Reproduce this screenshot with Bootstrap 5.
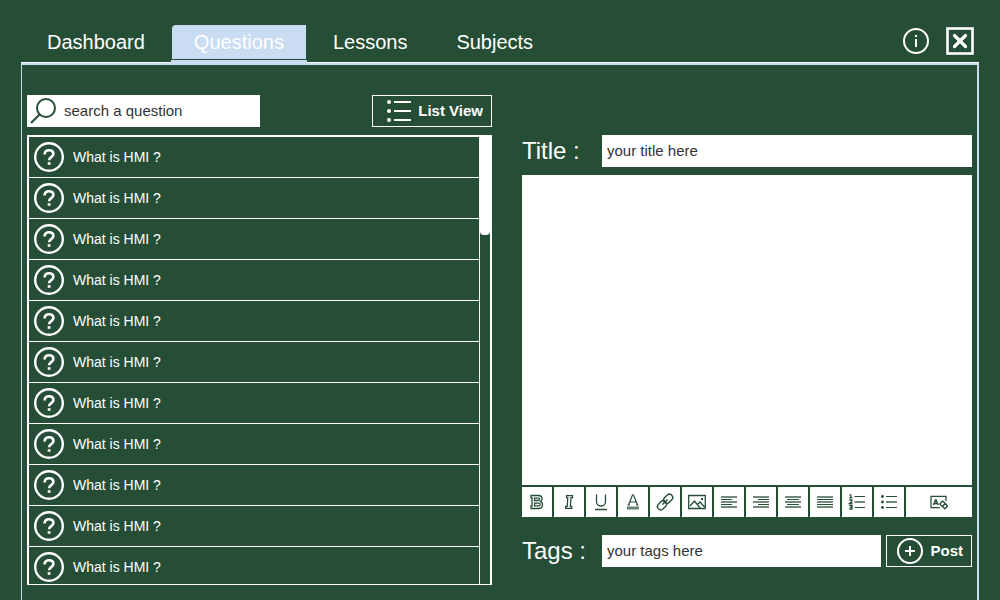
<!DOCTYPE html>
<html lang="en">
<head>
<meta charset="utf-8">
<meta name="viewport" content="width=device-width, initial-scale=1">
<title>Questions</title>
<link href="https://cdn.jsdelivr.net/npm/bootstrap@5.3.0/dist/css/bootstrap.min.css" rel="stylesheet">
<style>
:root { --board: #264e36; --sky: #c9dcf2; }
body { background: var(--board); color: #fff; font-family: "Liberation Sans", Arial, sans-serif; font-size: 14px; line-height: 20px; }
svg { display: block; flex: none; fill: none; stroke: currentColor; }
.page { height: 100vh; min-height: 480px; padding: 25px 21px 0; }
.tabs { gap: 5px; padding-left: 4px; }
.tabs .nav-link { position: relative; height: 34px; margin-bottom: 3px; padding: 0 22px; line-height: 34px; font-size: 20px; color: #fff; border-radius: 4px 0 0 0; }
.tabs .nav-link.active { background: var(--sky); }
.tabs .nav-link.active::after { content: ""; position: absolute; left: -1px; right: -1px; bottom: -4px; height: 3px; background: var(--sky); }
.tools { gap: 17px; padding-right: 5px; height: 31px; }
.plain { display: block; padding: 0; border: 0; background: none; color: #fff; }
.panel { min-height: 0; border: solid var(--sky); border-width: 2px 2px 0 1px; display: grid; grid-template-columns: 31fr 30fr; grid-template-rows: minmax(0, 1fr); gap: 30px; padding: 30px 5px 15px; }
.topline { border-top: 1px solid #fff; }
.field { height: 32px; min-width: 0; padding: 0 5px 2px; border: 0; border-radius: 0; background: #fff; font-size: 15px; color: #333; }
.field::placeholder { color: #333; opacity: 1; }
.search { width: 50%; height: 32px; background: #fff; color: var(--board); padding-left: 2px; }
.outlined { height: 32px; border: 1px solid #fff; border-radius: 0; color: #fff; font-size: 15px; font-weight: bold; line-height: 20px; padding: 0 8px 0 9px; gap: 7px; white-space: nowrap; }
.outlined:hover { background: #fff; color: var(--board); }
.questions { min-height: 0; border: solid #fff; border-width: 2px 2px 1px; }
.questions .list-group-item { height: 41px; padding: 0 5px; gap: 9px; background: none; color: #fff; border: 0; border-bottom: 1px solid #fff; border-radius: 0; }
.track { width: 11px; border-left: 1px solid #fff; }
.thumb { height: 22%; background: #fff; border-radius: 0 0 4px 4px; }
.form-side { padding: 40px 0 18px; }
.caption { width: 80px; font-size: 24px; line-height: 32px; }
.writing { border: 0; border-radius: 0; resize: none; background: #fff; margin: 8px 0 2px; padding: 5px; min-height: 0; }
.tool { width: 30px; height: 30px; border: 0; border-radius: 0; background: #fff; color: var(--board); padding: 0; display: flex; align-items: center; justify-content: center; }
.bar { gap: 2px; margin-bottom: 18px; }
.tag-row { column-gap: 5px; }
.tag-row .caption { margin-right: -5px; }
</style>
</head>
<body>
<svg width="0" height="0" class="position-absolute" aria-hidden="true">
  <symbol id="ask" viewBox="0 0 30 30">
    <circle cx="15" cy="15" r="13.8" stroke-width="2.4"/>
    <path d="M10.6 12.4C10.6 9.600 12.400 8.200 15 8.200s4.400 1.500 4.400 3.800c0 3.100-4.300 3.200-4.300 6.200" stroke-width="2.600"/>
    <path d="M15.100 20.200v2.600" stroke-width="2.800"/>
  </symbol>
</svg>
<div class="page d-flex flex-column">
  <header class="d-flex justify-content-between">
    <nav class="nav tabs flex-nowrap">
      <a class="nav-link" href="#">Dashboard</a>
      <a class="nav-link active" href="#" aria-current="page">Questions</a>
      <a class="nav-link" href="#">Lessons</a>
      <a class="nav-link" href="#">Subjects</a>
    </nav>
    <div class="tools d-flex align-items-center">
      <button class="plain" type="button" aria-label="Information"><svg width="26" height="26" viewBox="0 0 26 26"><circle cx="13" cy="13" r="12" stroke-width="2"/><path d="M13 11v8M13 7v2" stroke-width="2"/></svg></button>
      <button class="plain" type="button" aria-label="Close"><svg width="28" height="30" viewBox="0 0 28 30"><rect x="1.500" y="2.500" width="25" height="25" stroke-width="2.600"/><path d="M8.500 9.500l11 11M19.500 9.500l-11 11" stroke-width="3.200" stroke-linecap="round"/></svg></button>
    </div>
  </header>
  <div class="topline"></div>
  <main class="panel flex-fill">
    <section class="d-flex flex-column">
      <div class="d-flex justify-content-between mb-2">
        <div class="search d-flex align-items-center">
          <svg width="30" height="32" viewBox="0 0 30 32"><circle cx="17" cy="13" r="9" stroke-width="2"/><path d="M10.500 19.500L2 28" stroke-width="2.200"/></svg>
          <input class="field flex-fill" type="text" placeholder="search a question" aria-label="Search a question">
        </div>
        <button class="btn outlined d-flex align-items-center" type="button">
          <svg class="ms-1" width="25" height="24" viewBox="0 0 25 24"><path d="M8 3h17M8 12h17M8 21h17" stroke-width="2"/><g fill="currentColor" stroke="none"><circle cx="3" cy="3" r="2"/><circle cx="3" cy="12" r="2"/><circle cx="3" cy="21" r="2"/></g></svg>
          List View
        </button>
      </div>
      <div class="questions d-flex flex-fill overflow-hidden">
        <ul class="list-group flex-fill" id="list"></ul>
        <div class="track"><div class="thumb"></div></div>
      </div>
    </section>
    <form class="form-side d-flex flex-column">
      <div class="d-flex">
        <label class="caption flex-shrink-0" for="title">Title :</label>
        <input class="field flex-fill" id="title" type="text" placeholder="your title here">
      </div>
      <textarea class="writing flex-fill w-100" aria-label="Question"></textarea>
      <div class="bar d-flex" role="toolbar" aria-label="Formatting">
        <button class="tool" type="button" aria-label="Bold"><svg width="18" height="18" viewBox="0 0 18 18"><path d="M3 2.500h7.500c4 0 4.500 4.500 2 6 3.200 1.500 2.500 7-1.500 7H3v-2.500h1V5H3zM6.500 5.200h4c1.500 0 1.500 2.300 0 2.300h-4zM6.500 10.200h4.500c1.600 0 1.600 2.700 0 2.700H6.500z" stroke-width="1.300"/></svg></button>
        <button class="tool" type="button" aria-label="Italic"><svg width="18" height="18" viewBox="0 0 18 18"><path d="M6.500 2.700h6v2h-1.500l-.6 8.600h1.300v2h-6v-2h1.500l.6-8.600H6.500z" stroke-width="1.300"/></svg></button>
        <button class="tool" type="button" aria-label="Underline"><svg width="18" height="18" viewBox="0 0 18 18"><path d="M4.500 1.500v7a4.500 4.500 0 0 0 9 0v-7M3 16.500h12" stroke-width="1.300"/></svg></button>
        <button class="tool" type="button" aria-label="Text colour"><svg width="18" height="18" viewBox="0 0 18 18"><path d="M4.500 12L8.500 2h1l4 10M6 9h6M3.500 12h2.500M12 12h2.500" stroke-width="1.200"/><path d="M3 15h12" stroke-width="3" opacity=".7"/></svg></button>
        <button class="tool" type="button" aria-label="Link"><svg width="18" height="18" viewBox="0 0 18 18"><g stroke-width="1.400"><rect x="7.200" y="2.400" width="10" height="6.600" rx="3.300" transform="rotate(-45 12.200 5.700)"/><rect x="1" y="9" width="10" height="6.600" rx="3.300" transform="rotate(-45 6 12.300)"/><path d="M6.500 11.500l5-5"/></g></svg></button>
        <button class="tool" type="button" aria-label="Image"><svg width="18" height="18" viewBox="0 0 18 18"><path d="M.7 2.500h16.600v13H.7zM2 13l4.500-5L12 15M9.500 11.500l2.500-2.500 4.500 5" stroke-width="1.300"/><rect x="13" y="5" width="2" height="2" fill="currentColor" stroke="none"/></svg></button>
        <button class="tool" type="button" aria-label="Align left"><svg width="16" height="14" viewBox="0 0 16 14"><path d="M0 2h16M0 7h16M0 12h16" stroke-width="2" opacity=".65"/><path d="M0 4.500h11M0 9.500h11"/></svg></button>
        <button class="tool" type="button" aria-label="Align right"><svg width="16" height="14" viewBox="0 0 16 14"><path d="M0 2h16M0 7h16M0 12h16" stroke-width="2" opacity=".65"/><path d="M5 4.500h11M5 9.500h11"/></svg></button>
        <button class="tool" type="button" aria-label="Align centre"><svg width="16" height="14" viewBox="0 0 16 14"><path d="M0 2h16M0 7h16M0 12h16" stroke-width="2" opacity=".65"/><path d="M2 4.500h12M2 9.500h12"/></svg></button>
        <button class="tool" type="button" aria-label="Justify"><svg width="16" height="14" viewBox="0 0 16 14"><path d="M0 2h16M0 7h16M0 12h16" stroke-width="2" opacity=".65"/><path d="M0 4.500h16M0 9.500h16"/></svg></button>
        <button class="tool" type="button" aria-label="Numbered list"><svg width="18" height="18" viewBox="0 0 18 18"><path d="M6.500 3.500H17M6.500 14.500H17" stroke-width="1.200"/><path d="M6.500 9H17" stroke-width="2" opacity=".65"/><path d="M1.500 1.800h1.300v3M1.200 4.800h3.200M1.300 7h2.500v1.500L1.500 10.500h3M1.300 12.500h2.700v3.500H1.300M2 14.200h2" stroke-width="1.300"/></svg></button>
        <button class="tool" type="button" aria-label="Bulleted list"><svg width="18" height="18" viewBox="0 0 18 18"><path d="M6 3.500h11M6 14.500h11" stroke-width="1.200"/><path d="M6 9h11" stroke-width="2" opacity=".65"/><g fill="currentColor" stroke="none"><circle cx="2.500" cy="3.500" r="1.400"/><circle cx="2.500" cy="9" r="1.400"/><circle cx="2.500" cy="14.500" r="1.400"/></g></svg></button>
        <button class="tool flex-fill" type="button" aria-label="Clear formatting"><svg width="20" height="18" viewBox="0 0 20 18"><path d="M11 14.700H2V3.300h15V8" stroke-width="1.300"/><path d="M4.500 12l2-5h.6l2 5M5.300 10.500h3" stroke-width="1.500"/><path d="M10.700 11l3-3 2.500 2.500-3 3zM13.500 13.500l2.700-3 2.300 2.500-2.500 2.700z" stroke-width="1.300" stroke-linejoin="round"/></svg></button>
      </div>
      <div class="tag-row d-flex">
        <label class="caption flex-shrink-0" for="tags">Tags :</label>
        <input class="field flex-fill" id="tags" type="text" placeholder="your tags here">
        <button class="btn outlined d-flex align-items-center flex-shrink-0" type="submit"><svg width="27" height="26" viewBox="0 0 27 26"><circle cx="14" cy="13" r="12" stroke-width="2"/><path d="M9 13h10M14 8v10" stroke-width="2"/></svg>Post</button>
      </div>
    </form>
  </main>
</div>
<script src="https://cdn.jsdelivr.net/npm/bootstrap@5.3.0/dist/js/bootstrap.bundle.min.js"></script>
<script>
const item = '<li class="list-group-item d-flex align-items-center flex-shrink-0"><svg width="30" height="30" aria-hidden="true"><use href="#ask"/></svg><span>What is HMI ?</span></li>';
document.getElementById('list').innerHTML = item.repeat(11);
</script>
</body>
</html>
